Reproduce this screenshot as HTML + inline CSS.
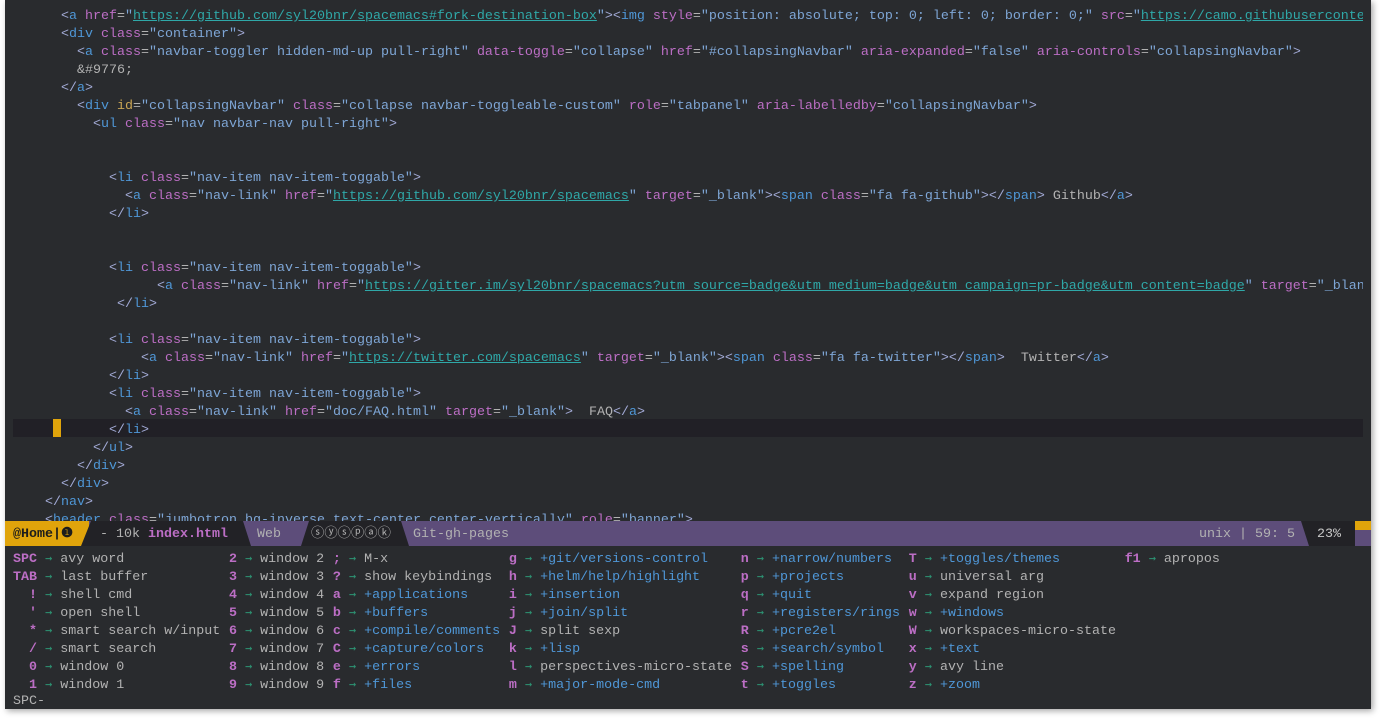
<!DOCTYPE html>
<html><head><meta charset="utf-8"><style>
*{margin:0;padding:0;box-sizing:border-box}
body{width:1380px;height:718px;background:#fff;position:relative;overflow:hidden;font-family:"Liberation Mono","DejaVu Sans Mono",monospace;font-size:13.333px;color:#b2b2b2}
#win{position:absolute;left:5px;top:0;width:1366px;height:709px;background:#292b2e;box-shadow:2px 2px 6px rgba(0,0,0,.35);overflow:hidden}
#code{position:absolute;left:8px;top:8px;width:1350px;height:513px;overflow:hidden;white-space:normal;line-height:18px}
.l{height:18px;white-space:pre}
.p{color:#a2aad6}.t{color:#4f97d7}.a{color:#bc6ec5}.i{color:#c9a554}.s{color:#7ea6d6}.u{color:#2fa8a8;text-decoration:underline}
#hl{position:absolute;left:8px;top:419px;width:1350px;height:18px;background:#212026}
#cur{position:absolute;left:48px;top:419px;width:8px;height:18px;background:#e0a40b}
#ml{position:absolute;left:0;top:521px;width:1366px;height:25px;background:#5d4d7a;line-height:27px;white-space:pre;color:#b2b2b2}
#ml div{position:absolute;top:0;height:25px}
.wk{position:absolute;left:8px;top:549px;line-height:18px;white-space:normal}
.r{height:18px;white-space:pre}
.c{display:inline-block}
.k{color:#bc6ec5;font-weight:bold}.ar{color:#2d9574;font-family:"DejaVu Sans Mono",monospace;font-size:12px}.b{color:#4f97d7}
</style></head><body><div id="win">
<div id="hl"></div><div id="cur"></div>
<div id="code">
<div class="l">      <span class="p">&lt;</span><span class="t">a</span> <span class="a">href</span>=<span class="s">"</span><span class="u">https://github.com/syl20bnr/spacemacs#fork-destination-box</span><span class="s">"</span><span class="p">&gt;&lt;</span><span class="t">img</span> <span class="a">style</span>=<span class="s">"position: absolute; top: 0; left: 0; border: 0;"</span> <span class="a">src</span>=<span class="s">"</span><span class="u">https://camo.githubusercontent.com/</span></div>
<div class="l">      <span class="p">&lt;</span><span class="t">div</span> <span class="a">class</span>=<span class="s">"container"</span><span class="p">&gt;</span></div>
<div class="l">        <span class="p">&lt;</span><span class="t">a</span> <span class="a">class</span>=<span class="s">"navbar-toggler hidden-md-up pull-right"</span> <span class="a">data-toggle</span>=<span class="s">"collapse"</span> <span class="a">href</span>=<span class="s">"#collapsingNavbar"</span> <span class="a">aria-expanded</span>=<span class="s">"false"</span> <span class="a">aria-controls</span>=<span class="s">"collapsingNavbar"</span><span class="p">&gt;</span></div>
<div class="l">        &amp;#9776;</div>
<div class="l">      <span class="p">&lt;/</span><span class="t">a</span><span class="p">&gt;</span></div>
<div class="l">        <span class="p">&lt;</span><span class="t">div</span> <span class="i">id</span>=<span class="s">"collapsingNavbar"</span> <span class="a">class</span>=<span class="s">"collapse navbar-toggleable-custom"</span> <span class="a">role</span>=<span class="s">"tabpanel"</span> <span class="a">aria-labelledby</span>=<span class="s">"collapsingNavbar"</span><span class="p">&gt;</span></div>
<div class="l">          <span class="p">&lt;</span><span class="t">ul</span> <span class="a">class</span>=<span class="s">"nav navbar-nav pull-right"</span><span class="p">&gt;</span></div>
<div class="l"> </div>
<div class="l"> </div>
<div class="l">            <span class="p">&lt;</span><span class="t">li</span> <span class="a">class</span>=<span class="s">"nav-item nav-item-toggable"</span><span class="p">&gt;</span></div>
<div class="l">              <span class="p">&lt;</span><span class="t">a</span> <span class="a">class</span>=<span class="s">"nav-link"</span> <span class="a">href</span>=<span class="s">"</span><span class="u">https://github.com/syl20bnr/spacemacs</span><span class="s">"</span> <span class="a">target</span>=<span class="s">"_blank"</span><span class="p">&gt;&lt;</span><span class="t">span</span> <span class="a">class</span>=<span class="s">"fa fa-github"</span><span class="p">&gt;&lt;/</span><span class="t">span</span><span class="p">&gt;</span> Github<span class="p">&lt;/</span><span class="t">a</span><span class="p">&gt;</span></div>
<div class="l">            <span class="p">&lt;/</span><span class="t">li</span><span class="p">&gt;</span></div>
<div class="l"> </div>
<div class="l"> </div>
<div class="l">            <span class="p">&lt;</span><span class="t">li</span> <span class="a">class</span>=<span class="s">"nav-item nav-item-toggable"</span><span class="p">&gt;</span></div>
<div class="l">                  <span class="p">&lt;</span><span class="t">a</span> <span class="a">class</span>=<span class="s">"nav-link"</span> <span class="a">href</span>=<span class="s">"</span><span class="u">https://gitter.im/syl20bnr/spacemacs?utm_source=badge&amp;utm_medium=badge&amp;utm_campaign=pr-badge&amp;utm_content=badge</span><span class="s">"</span> <span class="a">target</span>=<span class="s">"_blank"</span></div>
<div class="l">             <span class="p">&lt;/</span><span class="t">li</span><span class="p">&gt;</span></div>
<div class="l"> </div>
<div class="l">            <span class="p">&lt;</span><span class="t">li</span> <span class="a">class</span>=<span class="s">"nav-item nav-item-toggable"</span><span class="p">&gt;</span></div>
<div class="l">                <span class="p">&lt;</span><span class="t">a</span> <span class="a">class</span>=<span class="s">"nav-link"</span> <span class="a">href</span>=<span class="s">"</span><span class="u">https://twitter.com/spacemacs</span><span class="s">"</span> <span class="a">target</span>=<span class="s">"_blank"</span><span class="p">&gt;&lt;</span><span class="t">span</span> <span class="a">class</span>=<span class="s">"fa fa-twitter"</span><span class="p">&gt;&lt;/</span><span class="t">span</span><span class="p">&gt;</span>  Twitter<span class="p">&lt;/</span><span class="t">a</span><span class="p">&gt;</span></div>
<div class="l">            <span class="p">&lt;/</span><span class="t">li</span><span class="p">&gt;</span></div>
<div class="l">            <span class="p">&lt;</span><span class="t">li</span> <span class="a">class</span>=<span class="s">"nav-item nav-item-toggable"</span><span class="p">&gt;</span></div>
<div class="l">              <span class="p">&lt;</span><span class="t">a</span> <span class="a">class</span>=<span class="s">"nav-link"</span> <span class="a">href</span>=<span class="s">"doc/FAQ.html"</span> <span class="a">target</span>=<span class="s">"_blank"</span><span class="p">&gt;</span>  FAQ<span class="p">&lt;/</span><span class="t">a</span><span class="p">&gt;</span></div>
<div class="l">            <span class="p">&lt;/</span><span class="t">li</span><span class="p">&gt;</span></div>
<div class="l">          <span class="p">&lt;/</span><span class="t">ul</span><span class="p">&gt;</span></div>
<div class="l">        <span class="p">&lt;/</span><span class="t">div</span><span class="p">&gt;</span></div>
<div class="l">      <span class="p">&lt;/</span><span class="t">div</span><span class="p">&gt;</span></div>
<div class="l">    <span class="p">&lt;/</span><span class="t">nav</span><span class="p">&gt;</span></div>
<div class="l">    <span class="p">&lt;</span><span class="t">header</span> <span class="a">class</span>=<span class="s">"jumbotron bg-inverse text-center center-vertically"</span> <span class="a">role</span>=<span class="s">"banner"</span><span class="p">&gt;</span></div>
</div>
<div id="ml">
<div style="left:0;width:84px;background:#e0a40b;color:#1c1c1c;padding-left:8px;font-weight:bold">@Home|❶</div>
<div style="left:76px;width:170px;background:#222226;clip-path:polygon(10px 0,100% 0,calc(100% - 8px) 0,100% 100%,0 100%);padding-left:19px">- 10k <b style="color:#bc6ec5">index.html</b></div>
<div style="left:296px;width:108px;background:#222226;clip-path:polygon(8px 0,calc(100% - 8px) 0,100% 100%,0 100%);padding-left:10px;color:#b2b2b2">ⓢⓨⓢⓟⓐⓚ</div>
<div style="left:252px">Web</div>
<div style="left:408px">Git-gh-pages</div>
<div style="left:1194px">unix | 59: 5</div>
<div style="left:1296px;width:54px;background:#222226;clip-path:polygon(0 0,100% 0,100% 100%,8px 100%);padding-left:16px;color:#c8c8c8">23%</div>
<div style="left:1350px;width:16px;height:9px;background:#e0a40b"></div>
</div>
<div class="wk">
<div class="r"><span class="c" style="width:27ch"><span class="k">SPC</span> <span class="ar">→</span> avy word</span><span class="c" style="width:13ch"><span class="k">2</span> <span class="ar">→</span> window 2</span><span class="c" style="width:22ch"><span class="k">;</span> <span class="ar">→</span> M-x</span><span class="c" style="width:29ch"><span class="k">g</span> <span class="ar">→</span> <span class="b">+git/versions-control</span></span><span class="c" style="width:21ch"><span class="k">n</span> <span class="ar">→</span> <span class="b">+narrow/numbers</span></span><span class="c" style="width:27ch"><span class="k">T</span> <span class="ar">→</span> <span class="b">+toggles/themes</span></span><span class="c"><span class="k">f1</span> <span class="ar">→</span> apropos</span></div>
<div class="r"><span class="c" style="width:27ch"><span class="k">TAB</span> <span class="ar">→</span> last buffer</span><span class="c" style="width:13ch"><span class="k">3</span> <span class="ar">→</span> window 3</span><span class="c" style="width:22ch"><span class="k">?</span> <span class="ar">→</span> show keybindings</span><span class="c" style="width:29ch"><span class="k">h</span> <span class="ar">→</span> <span class="b">+helm/help/highlight</span></span><span class="c" style="width:21ch"><span class="k">p</span> <span class="ar">→</span> <span class="b">+projects</span></span><span class="c" style="width:27ch"><span class="k">u</span> <span class="ar">→</span> universal arg</span></div>
<div class="r"><span class="c" style="width:27ch"><span class="k">  !</span> <span class="ar">→</span> shell cmd</span><span class="c" style="width:13ch"><span class="k">4</span> <span class="ar">→</span> window 4</span><span class="c" style="width:22ch"><span class="k">a</span> <span class="ar">→</span> <span class="b">+applications</span></span><span class="c" style="width:29ch"><span class="k">i</span> <span class="ar">→</span> <span class="b">+insertion</span></span><span class="c" style="width:21ch"><span class="k">q</span> <span class="ar">→</span> <span class="b">+quit</span></span><span class="c" style="width:27ch"><span class="k">v</span> <span class="ar">→</span> expand region</span></div>
<div class="r"><span class="c" style="width:27ch"><span class="k">  '</span> <span class="ar">→</span> open shell</span><span class="c" style="width:13ch"><span class="k">5</span> <span class="ar">→</span> window 5</span><span class="c" style="width:22ch"><span class="k">b</span> <span class="ar">→</span> <span class="b">+buffers</span></span><span class="c" style="width:29ch"><span class="k">j</span> <span class="ar">→</span> <span class="b">+join/split</span></span><span class="c" style="width:21ch"><span class="k">r</span> <span class="ar">→</span> <span class="b">+registers/rings</span></span><span class="c" style="width:27ch"><span class="k">w</span> <span class="ar">→</span> <span class="b">+windows</span></span></div>
<div class="r"><span class="c" style="width:27ch"><span class="k">  *</span> <span class="ar">→</span> smart search w/input</span><span class="c" style="width:13ch"><span class="k">6</span> <span class="ar">→</span> window 6</span><span class="c" style="width:22ch"><span class="k">c</span> <span class="ar">→</span> <span class="b">+compile/comments</span></span><span class="c" style="width:29ch"><span class="k">J</span> <span class="ar">→</span> split sexp</span><span class="c" style="width:21ch"><span class="k">R</span> <span class="ar">→</span> <span class="b">+pcre2el</span></span><span class="c" style="width:27ch"><span class="k">W</span> <span class="ar">→</span> workspaces-micro-state</span></div>
<div class="r"><span class="c" style="width:27ch"><span class="k">  /</span> <span class="ar">→</span> smart search</span><span class="c" style="width:13ch"><span class="k">7</span> <span class="ar">→</span> window 7</span><span class="c" style="width:22ch"><span class="k">C</span> <span class="ar">→</span> <span class="b">+capture/colors</span></span><span class="c" style="width:29ch"><span class="k">k</span> <span class="ar">→</span> <span class="b">+lisp</span></span><span class="c" style="width:21ch"><span class="k">s</span> <span class="ar">→</span> <span class="b">+search/symbol</span></span><span class="c" style="width:27ch"><span class="k">x</span> <span class="ar">→</span> <span class="b">+text</span></span></div>
<div class="r"><span class="c" style="width:27ch"><span class="k">  0</span> <span class="ar">→</span> window 0</span><span class="c" style="width:13ch"><span class="k">8</span> <span class="ar">→</span> window 8</span><span class="c" style="width:22ch"><span class="k">e</span> <span class="ar">→</span> <span class="b">+errors</span></span><span class="c" style="width:29ch"><span class="k">l</span> <span class="ar">→</span> perspectives-micro-state</span><span class="c" style="width:21ch"><span class="k">S</span> <span class="ar">→</span> <span class="b">+spelling</span></span><span class="c" style="width:27ch"><span class="k">y</span> <span class="ar">→</span> avy line</span></div>
<div class="r"><span class="c" style="width:27ch"><span class="k">  1</span> <span class="ar">→</span> window 1</span><span class="c" style="width:13ch"><span class="k">9</span> <span class="ar">→</span> window 9</span><span class="c" style="width:22ch"><span class="k">f</span> <span class="ar">→</span> <span class="b">+files</span></span><span class="c" style="width:29ch"><span class="k">m</span> <span class="ar">→</span> <span class="b">+major-mode-cmd</span></span><span class="c" style="width:21ch"><span class="k">t</span> <span class="ar">→</span> <span class="b">+toggles</span></span><span class="c" style="width:27ch"><span class="k">z</span> <span class="ar">→</span> <span class="b">+zoom</span></span></div>
<div class="r">SPC-</div>
</div>
</div></body></html>
